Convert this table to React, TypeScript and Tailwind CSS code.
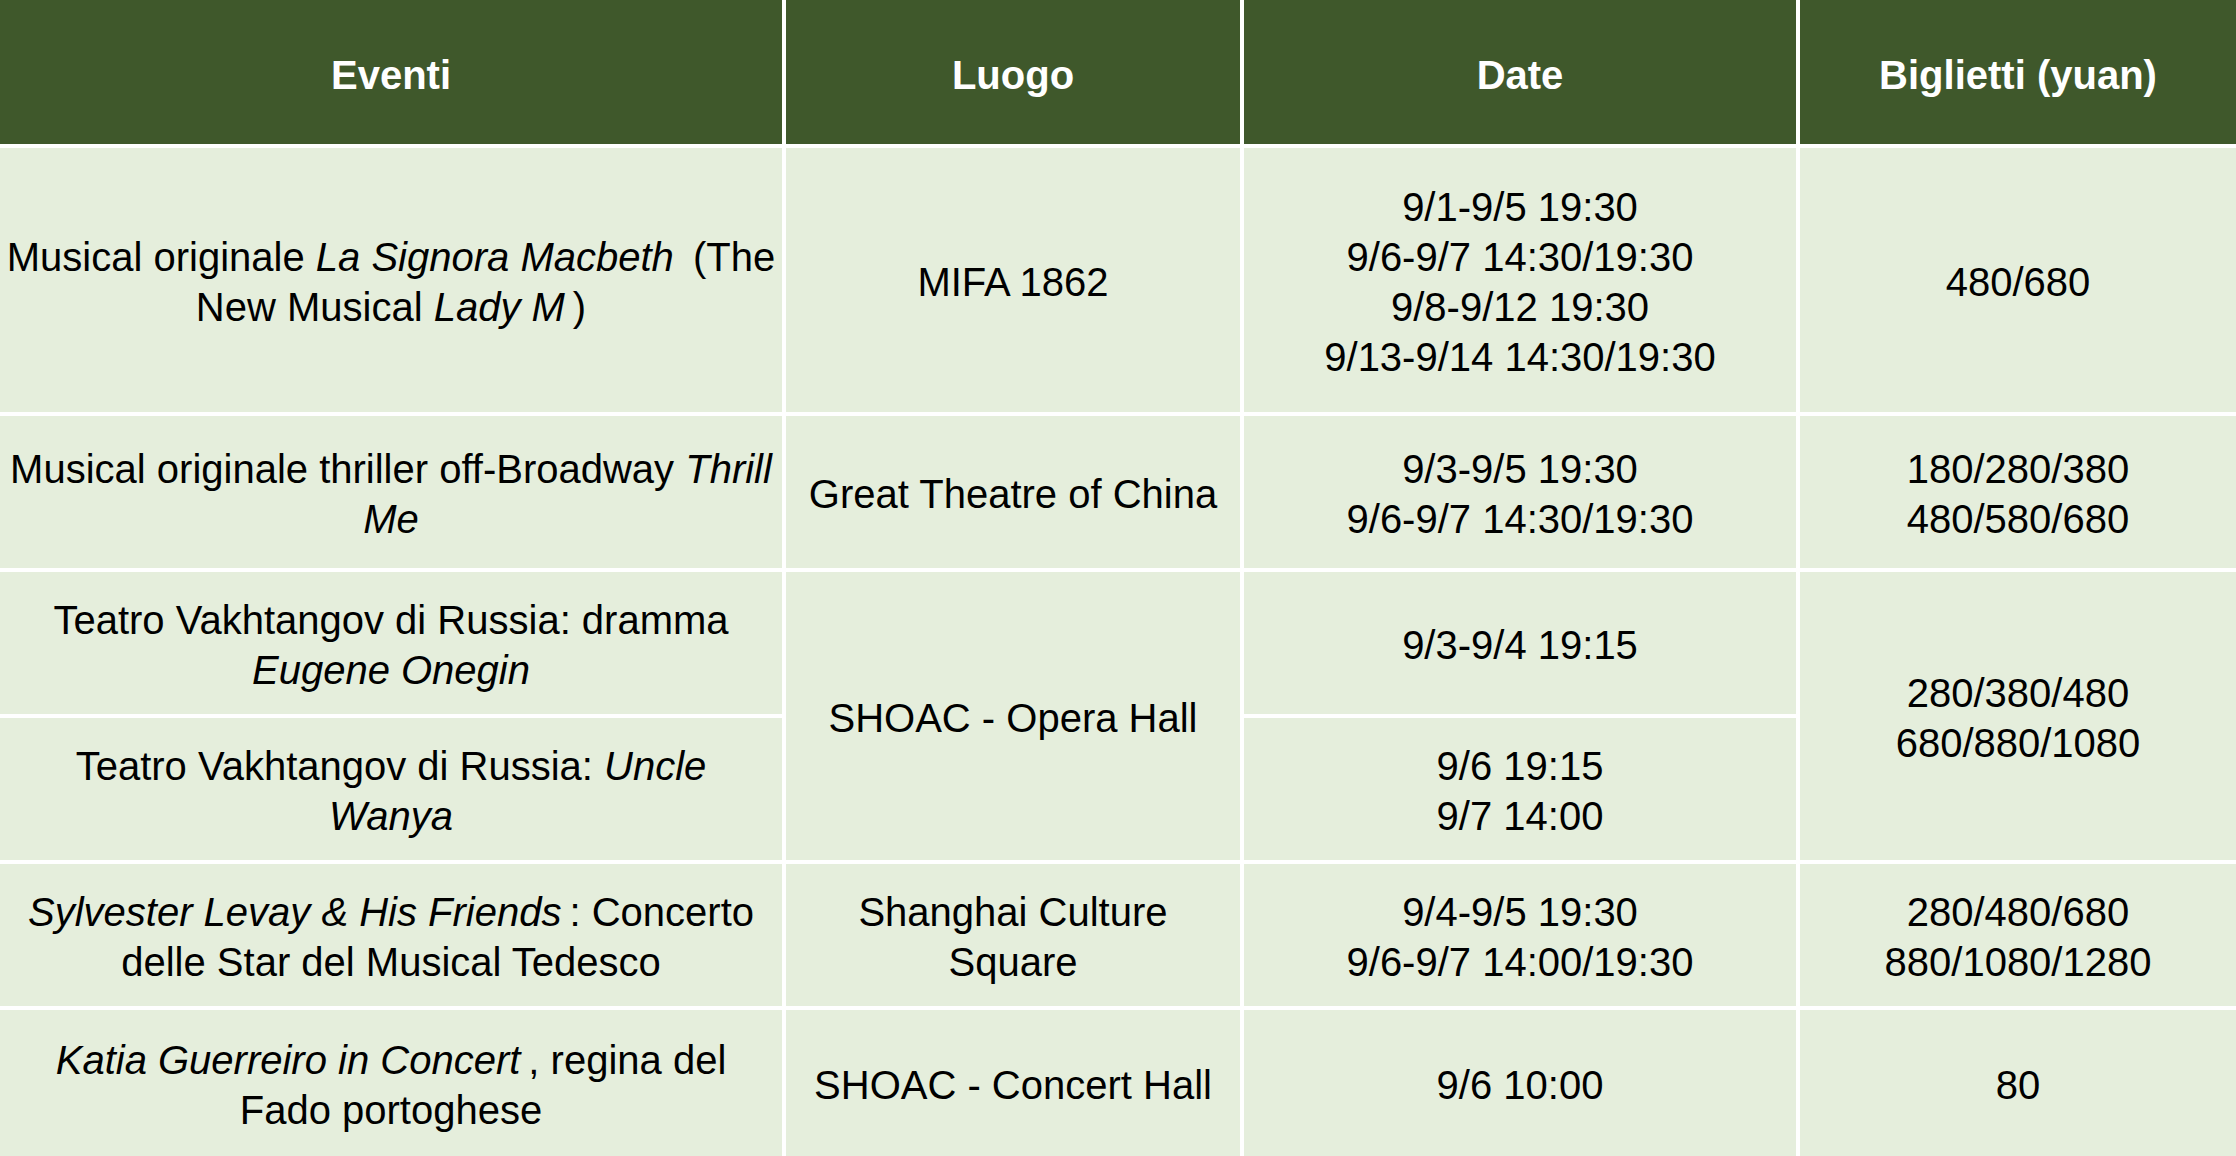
import React from "react";

const cell =
  "bg-[#e5eedc] flex flex-col items-center justify-center text-center text-black text-[40px] leading-[50px] px-1 pt-[3px]";
const head =
  "bg-[#3f582b] flex items-center justify-center text-center text-white font-bold text-[40px] leading-[48px] pt-[6px]";

export default function App() {
  return (
    <div
      className="w-[2236px] h-[1156px] bg-white grid gap-[4px] grid-cols-[782px_454px_552px_436px] grid-rows-[144px_264px_152px_142px_142px_142px_146px]"
      style={{ fontFamily: '"Liberation Sans", Arial, sans-serif' }}
    >
      <div className={head}>Eventi</div>
      <div className={head}>Luogo</div>
      <div className={head}>Date</div>
      <div className={head}>Biglietti (yuan)</div>

      {/* Row 1 */}
      <div className={cell}>
        <span className="whitespace-nowrap">
          Musical originale <i>La Signora Macbeth</i>&nbsp;&thinsp;(The
        </span>
        <span>
          New Musical <i>Lady M</i>&thinsp;)
        </span>
      </div>
      <div className={cell}>MIFA 1862</div>
      <div className={cell}>
        <span>9/1-9/5 19:30</span>
        <span>9/6-9/7 14:30/19:30</span>
        <span>9/8-9/12 19:30</span>
        <span>9/13-9/14 14:30/19:30</span>
      </div>
      <div className={cell}>480/680</div>

      {/* Row 2 */}
      <div className={cell}>
        <span className="whitespace-nowrap">
          Musical originale thriller off-Broadway <i>Thrill</i>
        </span>
        <span>
          <i>Me</i>
        </span>
      </div>
      <div className={cell}>Great Theatre of China</div>
      <div className={cell}>
        <span>9/3-9/5 19:30</span>
        <span>9/6-9/7 14:30/19:30</span>
      </div>
      <div className={cell}>
        <span>180/280/380</span>
        <span>480/580/680</span>
      </div>

      {/* Row 3 */}
      <div className={cell}>
        <span>Teatro Vakhtangov di Russia: dramma</span>
        <span>
          <i>Eugene Onegin</i>
        </span>
      </div>
      <div className={`${cell} row-span-2`}>SHOAC - Opera Hall</div>
      <div className={cell}>9/3-9/4 19:15</div>
      <div className={`${cell} row-span-2`}>
        <span>280/380/480</span>
        <span>680/880/1080</span>
      </div>

      {/* Row 4 */}
      <div className={cell}>
        <span>
          Teatro Vakhtangov di Russia: <i>Uncle</i>
        </span>
        <span>
          <i>Wanya</i>
        </span>
      </div>
      <div className={cell}>
        <span>9/6 19:15</span>
        <span>9/7 14:00</span>
      </div>

      {/* Row 5 */}
      <div className={cell}>
        <span>
          <i>Sylvester Levay &amp; His Friends</i>&thinsp;: Concerto
        </span>
        <span>delle Star del Musical Tedesco</span>
      </div>
      <div className={cell}>
        <span>Shanghai Culture</span>
        <span>Square</span>
      </div>
      <div className={cell}>
        <span>9/4-9/5 19:30</span>
        <span>9/6-9/7 14:00/19:30</span>
      </div>
      <div className={cell}>
        <span>280/480/680</span>
        <span>880/1080/1280</span>
      </div>

      {/* Row 6 */}
      <div className={cell}>
        <span>
          <i>Katia Guerreiro in Concert</i>&thinsp;, regina del
        </span>
        <span>Fado portoghese</span>
      </div>
      <div className={cell}>SHOAC - Concert Hall</div>
      <div className={cell}>9/6 10:00</div>
      <div className={cell}>80</div>
    </div>
  );
}
